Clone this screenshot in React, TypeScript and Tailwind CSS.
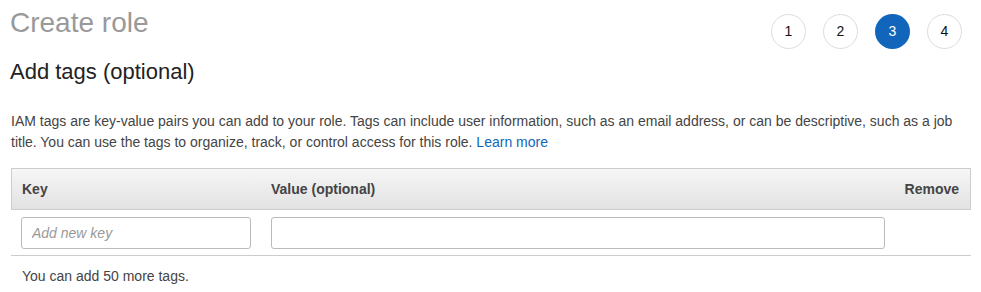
const steps = [1, 2, 3, 4];

export default function App() {
  const current = 3;

  return (
    <div className="w-[981px] h-[292px] bg-white px-[10px] pt-[7px] font-['Liberation_Sans',Arial,sans-serif] text-[#444]">
      {/* Title + wizard steps */}
      <div className="flex items-start justify-between">
        <h1 className="text-[28px] leading-[32px] text-[#999] font-normal">Create role</h1>
        <div className="mt-[7px] mr-[9px] flex gap-[17px]">
          {steps.map(s => (
            <div
              key={s}
              className={
                s === current
                  ? 'w-[35px] h-[35px] rounded-full bg-[#1166bb] text-white flex items-center justify-center text-[14px]'
                  : 'w-[35px] h-[35px] rounded-full border border-[#ddd] text-[#111] flex items-center justify-center text-[14px]'
              }
            >
              {s}
            </div>
          ))}
        </div>
      </div>

      <h2 className="mt-[10px] text-[22px] leading-[26px] text-[#222] font-normal">Add tags (optional)</h2>

      <p className="mt-[26px] text-[14px] leading-[21px] pl-px">
        IAM tags are key-value pairs you can add to your role. Tags can include user information, such as an email address,
        or can be descriptive, such as a job title. You can use the tags to organize, track, or control access for this
        role. <a className="text-[#1166bb]">Learn more</a>
      </p>

      {/* Tags table */}
      <div className="mt-[15px] ml-px w-[960px]">
        <div className="flex h-[42px] items-center border border-[#ccc] bg-linear-to-b from-[#f6f6f6] to-[#e2e2e2] text-[14px] font-bold text-[#444]">
          <div className="w-[250px] pl-[10px]">Key</div>
          <div className="flex-1 pl-[9px]">Value (optional)</div>
          <div className="pr-[11px]">Remove</div>
        </div>
        <div className="flex border-b border-[#ccc] pt-[7px] pb-[6px]">
          <div className="w-[250px] pl-[10px]">
            <input
              placeholder="Add new key"
              className="w-[230px] h-[32px] rounded-[3px] border border-[#bbb] px-[10px] text-[14px] italic placeholder:text-[#999] outline-none"
            />
          </div>
          <div className="pl-[10px]">
            <input className="w-[614px] h-[32px] rounded-[3px] border border-[#bbb] px-[10px] text-[14px] outline-none" />
          </div>
        </div>
      </div>

      <div className="mt-[10px] pl-[12px] text-[14px] leading-[20px]">You can add 50 more tags.</div>
    </div>
  );
}
